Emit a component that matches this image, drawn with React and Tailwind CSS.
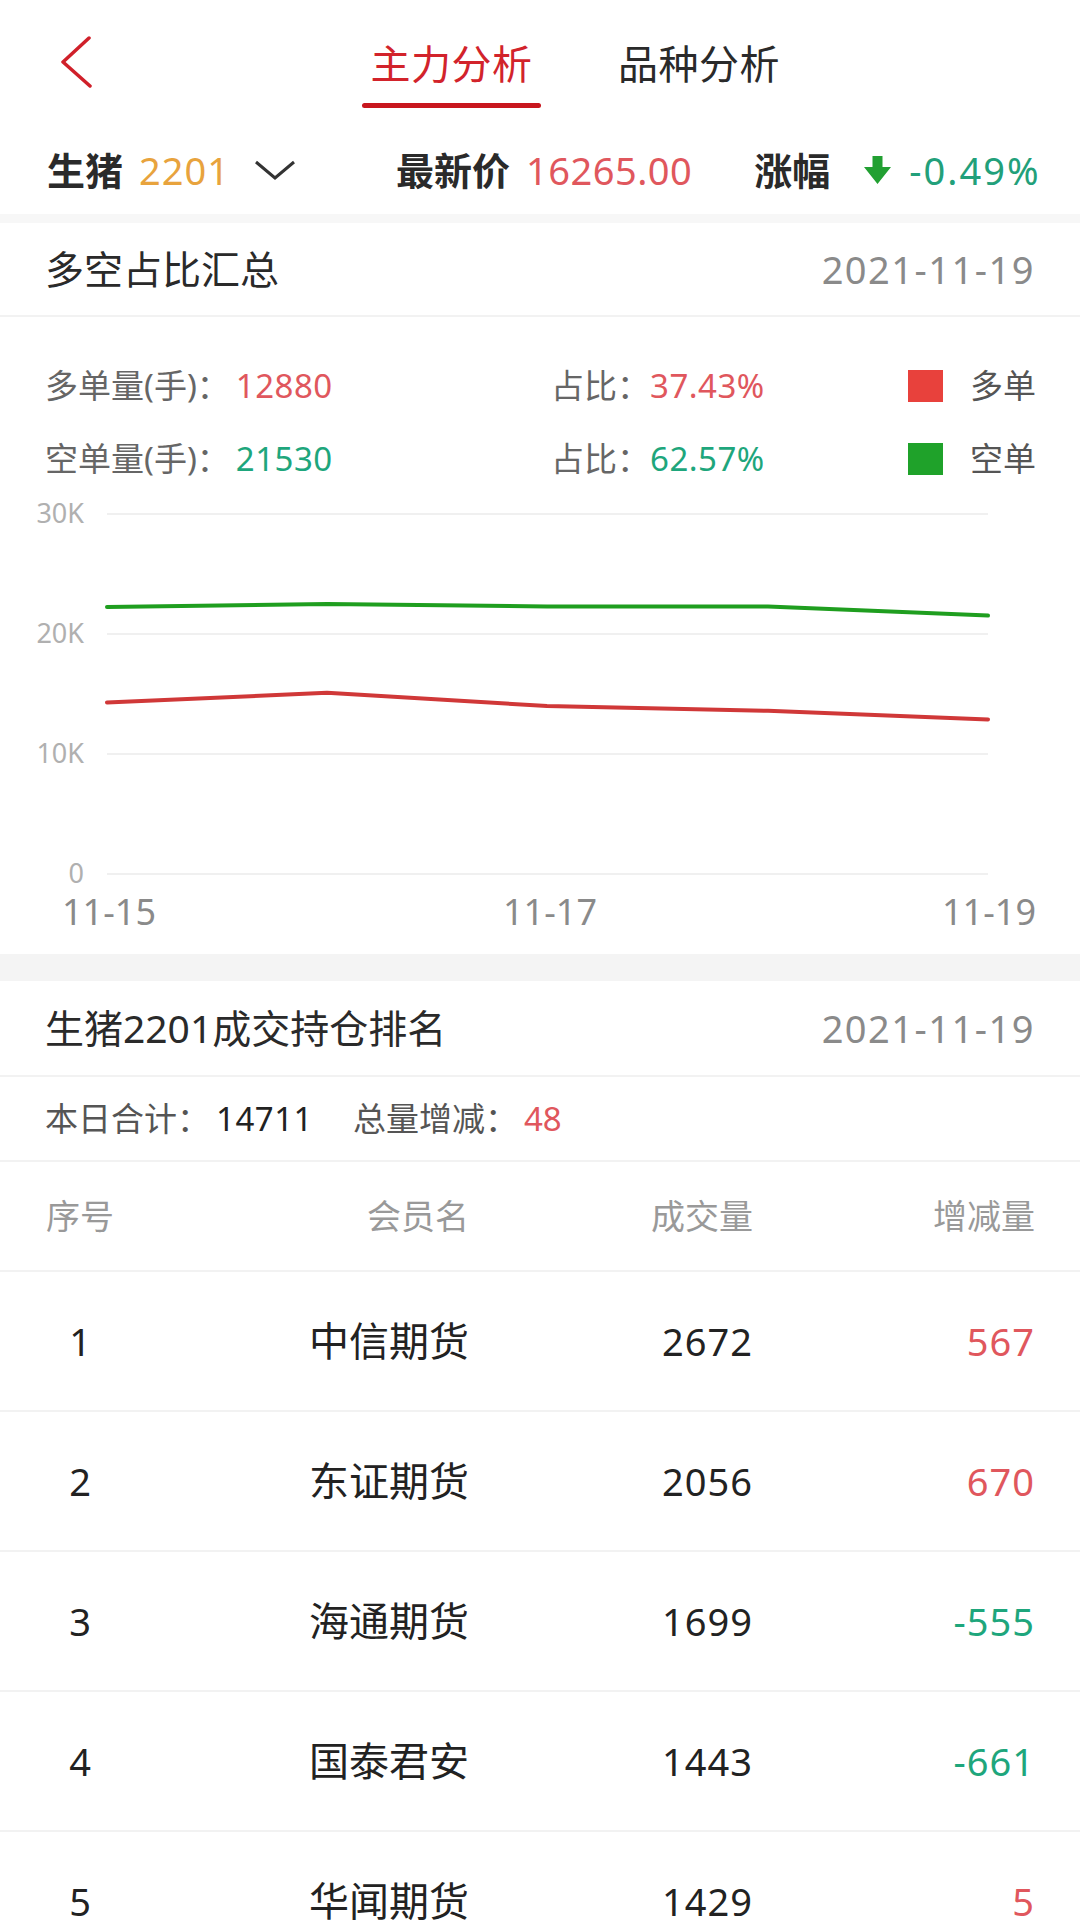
import React from 'react';

const xs = [107, 327, 547, 768, 988];
const longVals = [14.3, 15.1, 14.0, 13.6, 12.88];
const shortVals = [22.25, 22.5, 22.3, 22.3, 21.53];

const rows = [
    { no: 1, name: '中信期货', vol: 2672, diff: '567', up: true },
    { no: 2, name: '东证期货', vol: 2056, diff: '670', up: true },
    { no: 3, name: '海通期货', vol: 1699, diff: '-555', up: false },
    { no: 4, name: '国泰君安', vol: 1443, diff: '-661', up: false },
    { no: 5, name: '华闻期货', vol: 1429, diff: '5', up: true },
];

function toPoints(vals) {
    return vals.map((v, i) => `${xs[i]},${(379 - v * 12).toFixed(1)}`).join(' ');
}

function Chart() {
    const grid = [
        { y: 19, label: '30K' },
        { y: 139, label: '20K' },
        { y: 259, label: '10K' },
        { y: 379, label: '0' },
    ];
    return (
        <svg width="1080" height="459" viewBox="0 0 1080 459" className="block">
            {grid.map((g) => (
                <g key={g.label}>
                    <line x1="107" x2="988" y1={g.y} y2={g.y} stroke="#f0f0f0" strokeWidth="2" />
                    <text x="84" y={g.y + 9} textAnchor="end" fontSize="27" fill="#b0b0b0" fontFamily="Noto Sans, sans-serif">
                        {g.label}
                    </text>
                </g>
            ))}
            <polyline points={toPoints(shortVals)} fill="none" stroke="#1f9e1f" strokeWidth="4" strokeLinejoin="round" strokeLinecap="round" />
            <polyline points={toPoints(longVals)} fill="none" stroke="#d03838" strokeWidth="4" strokeLinejoin="round" strokeLinecap="round" />
            <g fontSize="36" fill="#8a8a8a" fontFamily="Noto Sans, sans-serif">
                <text x="109" y="430" textAnchor="middle">11-15</text>
                <text x="550" y="430" textAnchor="middle">11-17</text>
                <text x="1036" y="430" textAnchor="end">11-19</text>
            </g>
        </svg>
    );
}

export default function App() {
    return (
        <div className="w-[1080px] min-h-[1920px] overflow-hidden bg-white text-[#222] font-[family-name:Noto_Sans,Noto_Sans_CJK_SC,sans-serif]">
            {/* top tabs */}
            <div className="flex h-[125px] items-start pl-[60px]">
                <svg width="32" height="52" viewBox="0 0 32 52" className="mt-[36px]">
                    <polyline points="29,2 3,26 30,50" fill="none" stroke="#d0202a" strokeWidth="3.5" strokeLinecap="round" strokeLinejoin="round" />
                </svg>
                <div className="ml-[270px] flex w-[179px] flex-col items-center pt-[42px]">
                    <span className="text-[40px] leading-[44px] tracking-[0.5px] text-[#d2232b]">主力分析</span>
                    <div className="mt-[17px] h-[5px] w-[179px] rounded-full bg-[#c8161e]" />
                </div>
                <div className="ml-[77px] pt-[42px] text-[40px] leading-[44px] tracking-[0.5px] text-[#2a2a2a]">品种分析</div>
            </div>

            {/* quote row */}
            <div className="flex h-[89px] items-center pl-[47px] text-[38px] leading-none">
                <span className="font-bold text-[#2a2a2a]">生猪</span>
                <span className="ml-[16px] tracking-[1px] text-[#e8a33d]">2201</span>
                <svg width="42" height="22" viewBox="0 0 42 22" className="ml-[24px]">
                    <polyline points="2,3 21,19 40,3" fill="none" stroke="#333" strokeWidth="3" />
                </svg>
                <span className="ml-[100px] font-bold text-[#2a2a2a]">最新价</span>
                <span className="ml-[16px] tracking-[0.5px] text-[#e0575d]">16265.00</span>
                <span className="ml-[62px] font-bold text-[#2a2a2a]">涨幅</span>
                <svg width="27" height="28" viewBox="0 0 27 28" className="ml-[34px]">
                    <path d="M8.5 0 H18.5 V11 H27 L13.5 28 L0 11 H8.5 Z" fill="#22a032" />
                </svg>
                <span className="ml-[18px] tracking-[2px] text-[#22a07a]">-0.49%</span>
            </div>

            <div className="h-[9px] bg-[#f7f7f7]" />

            {/* long/short summary */}
            <div className="flex h-[94px] items-center justify-between border-b-2 border-[#f2f2f2] px-[45px]">
                <span className="text-[39px] text-[#2a2a2a]">多空占比汇总</span>
                <span className="text-[38px] tracking-[1.5px] text-[#8a8a8a]">2021-11-19</span>
            </div>

            <div className="pt-[32px] text-[33px] leading-none">
                <div className="flex h-[73px] items-center pl-[45px]">
                    <div className="flex w-[506px] items-center">
                        <span className="text-[#666]">多单量(手)：</span>
                        <span className="ml-[6px] tracking-[0.5px] text-[#e0575d]">12880</span>
                    </div>
                    <div className="flex w-[357px] items-center">
                        <span className="text-[#666]">占比：</span>
                        <span className="tracking-[0.5px] text-[#e0575d]">37.43%</span>
                    </div>
                    <div className="h-[32px] w-[35px] bg-[#e8413c]" />
                    <span className="ml-[27px] text-[#555]">多单</span>
                </div>
                <div className="flex h-[73px] items-center pl-[45px]">
                    <div className="flex w-[506px] items-center">
                        <span className="text-[#666]">空单量(手)：</span>
                        <span className="ml-[6px] tracking-[0.5px] text-[#1ea67c]">21530</span>
                    </div>
                    <div className="flex w-[357px] items-center">
                        <span className="text-[#666]">占比：</span>
                        <span className="tracking-[0.5px] text-[#1ea67c]">62.57%</span>
                    </div>
                    <div className="h-[32px] w-[35px] bg-[#1fa22a]" />
                    <span className="ml-[27px] text-[#555]">空单</span>
                </div>
            </div>

            <Chart />

            <div className="h-[27px] bg-[#f4f4f4]" />

            {/* ranking */}
            <div className="flex h-[96px] items-center justify-between border-b-2 border-[#f2f2f2] px-[45px]">
                <span className="text-[39px] text-[#2a2a2a]">生猪2201成交持仓排名</span>
                <span className="text-[38px] tracking-[1.5px] text-[#8a8a8a]">2021-11-19</span>
            </div>

            <div className="flex h-[85px] items-center border-b-2 border-[#f2f2f2] px-[45px] text-[33px] leading-none">
                <span className="text-[#555]">本日合计：</span>
                <span className="ml-[6px] tracking-[0.5px] text-[#222]">14711</span>
                <span className="ml-[40px] text-[#555]">总量增减：</span>
                <span className="ml-[6px] text-[#e0575d]">48</span>
            </div>

            <div className="grid h-[110px] grid-cols-[70px_354px_284px_1fr] items-center border-b-2 border-[#f2f2f2] px-[45px] text-[34px] text-[#999]">
                <span className="text-center">序号</span>
                <span className="text-right">会员名</span>
                <span className="text-right">成交量</span>
                <span className="text-right">增减量</span>
            </div>

            {rows.map((r) => (
                <div key={r.no} className="grid h-[140px] grid-cols-[70px_354px_284px_1fr] items-center border-b-2 border-[#f2f2f2] px-[45px] text-[38px] text-[#222]">
                    <span className="text-center">{r.no}</span>
                    <span className="text-right text-[40px]">{r.name}</span>
                    <span className="text-right tracking-[1px]">{r.vol}</span>
                    <span className={`text-right tracking-[1px] ${r.up ? 'text-[#e0575d]' : 'text-[#1ea67c]'}`}>{r.diff}</span>
                </div>
            ))}
        </div>
    );
}
